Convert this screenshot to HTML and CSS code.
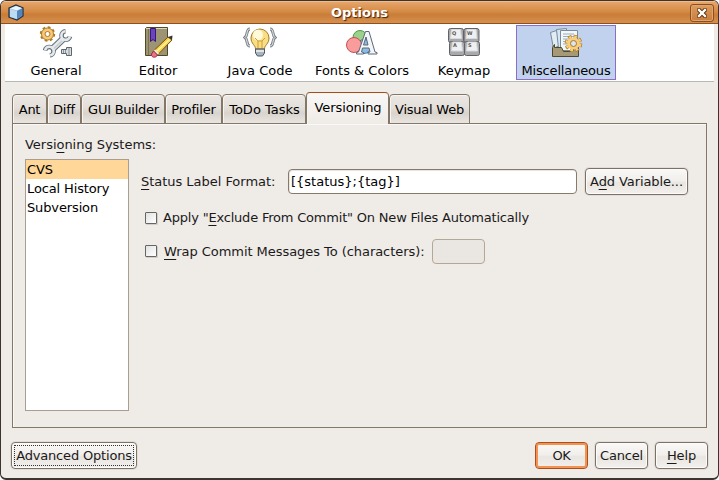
FILE: index.html
```html
<!DOCTYPE html>
<html lang="en">
<head>
<meta charset="utf-8">
<title>Options</title>
<link rel="stylesheet" href="styles.css">
</head>
<body>
<div class="window">
  <header class="titlebar">
    <svg class="app-icon" width="16" height="18" viewBox="0 0 16 18"><path d="M1 4 8 1l7 3v8l-6 4-8-3z" fill="#8db5dc" stroke="#234" stroke-width="1.3"/><path d="M2 5l7 2v8l-7-2z" fill="#bcdcf5"/><path d="M9 7l5-2.500v7L9 15z" fill="#5585bd"/><path d="M2 4.500 8 2l6 2-5 2.500z" fill="#eaf5fc"/></svg>
    <h1>Options</h1>
    <button class="close" aria-label="Close"><svg width="10" height="10" viewBox="0 0 10 10"><path d="M2 2l6 6M8 2l-6 6" stroke="#5a2c0c" stroke-width="4.200" stroke-linecap="square"/><path d="M2 2l6 6M8 2l-6 6" stroke="#fff" stroke-width="2.400" stroke-linecap="square"/></svg></button>
  </header>
  <nav class="toolbar">
    <div class="cat"><svg width="34" height="34" viewBox="0 0 34 34">
      <circle cx="8.500" cy="9" r="6.800" fill="none" stroke="#b17822" stroke-width="1.800" stroke-dasharray="2.800 2.540"/><circle cx="8.500" cy="9" r="6" fill="#f5ca79" stroke="#b17822"/><circle cx="8.500" cy="9" r="2.500" fill="#fff" stroke="#b17822"/>
      <g fill="none" stroke="#67717a"><path d="M26.500 6.200A4.300 4.300 0 1 0 31 11.500M6 25.500A4.300 4.300 0 1 1 11 30.500" stroke-width="4.600"/><path d="M24 14L13.500 24" stroke-width="7"/></g>
      <g fill="none" stroke="#e5e9ec"><path d="M26.300 6.300A4.300 4.300 0 1 0 30.900 11.300M6.200 25.300A4.300 4.300 0 1 1 11.100 30.300" stroke-width="2.600"/><path d="M24.500 13.500L13 24.500" stroke-width="4.800"/></g>
      <path d="M23 16L15 23.500" stroke="#c5cbd0" stroke-width="1.500"/>
      <path d="M22.500 24.500h5v-2h5v8h-5V28.500h-5z" fill="#d8dee2" stroke="#5c666f"/><path d="M24.500 25v3m2-3v3M30 23v7" stroke="#8b959d"/></svg><span>General</span></div>
    <div class="cat"><svg width="34" height="34" viewBox="0 0 34 34"><path d="M4.500 3.500l1-1h21v28h-22z" fill="#9c9475" stroke="#514826"/><path d="M5 3.500h21" stroke="#ddd7bd"/><path d="M7.500 4v26" stroke="#7b7250"/><path d="M9.500 3.500h5v13l-2.500-2-2.500 2z" fill="#6944ba" stroke="#34177a"/><path d="M12.500 26L27 12l4 3L16.500 30z" fill="#f9d149" stroke="#725515"/><path d="M15.500 26.500l13-12" stroke="#fff3a4" stroke-width="1.500"/><path d="M27 12l4.500-1.500-.5 4.500z" fill="#333"/><path d="M12.500 26l4 4c-2 4-7 2-6-1z" fill="#ef7184" stroke="#9b3140"/><path d="M13.500 25l4 4" stroke="#eee" stroke-width="1.500"/></svg><span>Editor</span></div>
    <div class="cat"><svg width="34" height="34" viewBox="0 0 34 34"><g fill="none" stroke="#7f858a" stroke-width="3"><path d="M7 4c-4 0-2 6-5 8.500 3 2 1 8.500 5 8.500M27 4c4 0 2 6 5 8.500-3 2-1 8.500-5 8.500"/></g><g fill="none" stroke="#e7eaec"><path d="M7 4c-4 0-2 6-5 8.500 3 2 1 8.500 5 8.500M27 4c4 0 2 6 5 8.500-3 2-1 8.500-5 8.500"/></g><path d="M12.500 24c0-4-4.500-5-4.500-11a9 9 0 0 1 18 0c0 6-4.500 7-4.500 11z" fill="#f9df83" stroke="#a2772d"/><ellipse cx="15" cy="10" rx="5" ry="5.500" fill="#fffad9"/><path d="M12 13l3 3v8m7-11l-3 3v8m-4-8h4" fill="none" stroke="#d09d38"/><path d="M12.500 24h9v4l-2 3h-5l-2-3z" fill="#a8b5bf" stroke="#4e5962"/><path d="M13 26h8" stroke="#f3f6f7" stroke-width="1.500"/></svg><span>Java Code</span></div>
    <div class="cat"><svg width="34" height="34" viewBox="0 0 34 34"><circle cx="15" cy="12.500" r="7" fill="#9bd28b" stroke="#4f9a49"/><circle cx="19" cy="21.500" r="7" fill="#8cbbe5" stroke="#3d72ad"/><circle cx="9" cy="20" r="7.500" fill="#fa9c9c" stroke="#c54f54"/><path d="M11.500 29v-1.500l2-.5 7-20.500h3.500l6 20.500 2 .5V29h-9v-1.500l2-.5-1-4h-6.500l-1 4 2 .5V29zM18.500 20h4.500l-2-8z" fill="#f4f5f6" stroke="#596a77" fill-rule="evenodd"/></svg><span>Fonts &amp; Colors</span></div>
    <div class="cat"><svg width="34" height="34" viewBox="0 0 34 34"><g stroke="#606266" fill="#a7a9ac"><rect x="1.500" y="3.500" width="15" height="14" rx="2"/><rect x="17" y="3.500" width="15" height="14" rx="2"/><rect x="2.500" y="16.500" width="15" height="14" rx="2"/><rect x="17.500" y="16.500" width="15" height="14" rx="2"/></g><g fill="#f0f0f1" stroke="#d9dadc"><path d="M4.500 4.500h9l1 9h-11zM20 4.500h9l1 9H19zM5.500 17h9l1 9h-11zM20.500 17h9l1 9h-11z"/></g><g class="keys"><text x="5" y="10">Q</text><text x="20" y="10">W</text><text x="6" y="22">A</text><text x="21" y="22">S</text></g></svg><span>Keymap</span></div>
    <div class="cat selected"><svg width="34" height="34" viewBox="0 0 34 34"><path d="M1.500 7.500l6-2 5 14-8 4z" fill="#e0edf5" stroke="#788b99"/><path d="M7.500 4.500l10-1v20h-8z" fill="#d5e7f2" stroke="#788b99"/><path d="M11.500 5.500h17v20h-17z" fill="#f2f7fa" stroke="#788b99"/><path d="M14 9h11m-11 2.500h11M14 14h7m-7 2.500h5m-5 2.500h5" stroke="#9cafbd"/><path d="M3.500 22.500l2-3v3h7l2 4h9l2-4h4v9h-26z" fill="#a69976" stroke="#524726"/><circle cx="24.500" cy="18.500" r="7.200" fill="none" stroke="#b77b20" stroke-width="3.200" stroke-dasharray="3.500 2.155"/><circle cx="24.500" cy="18.500" r="6.800" fill="none" stroke="#f9cf79" stroke-width="2.400" stroke-dasharray="2.500 2.840" stroke-dashoffset="-.5"/><circle cx="24.500" cy="18.500" r="6" fill="#f9cf79"/><circle cx="24.500" cy="18.500" r="3" fill="#dce5ef" stroke="#a87528"/></svg><span>Miscellaneous</span></div>
  </nav>
  <main>
    <div class="tabs">
      <div class="tab ant">Ant</div><div class="tab diff">Diff</div><div class="tab gui">GUI Builder</div><div class="tab prof">Profiler</div><div class="tab todo">ToDo Tasks</div><div class="tab active">Versioning</div><div class="tab visual">Visual Web</div>
    </div>
    <section class="panel">
      <div class="systems">
        <label>Versi<u>o</u>ning Systems:</label>
        <ul><li class="current">CVS</li><li>Local History</li><li>Subversion</li></ul>
      </div>
      <div class="settings">
        <div class="row format"><label><u>S</u>tatus Label Format:</label><div class="field">[{status};{tag}]</div><button class="btn add">A<u>d</u>d Variable...</button></div>
        <div class="row check exclude"><i class="box"></i><label>Apply "<u>E</u>xclude From Commit" On New Files Automatically</label></div>
        <div class="row check wrap"><i class="box"></i><label><u>W</u>rap Commit Messages To (characters):</label><div class="field disabled"></div></div>
      </div>
    </section>
    <footer><button class="btn advanced"><span>Advanced Options</span></button><button class="btn ok">OK</button><button class="btn cancel">Cancel</button><button class="btn help"><u>H</u>elp</button></footer>
  </main>
</div>
</body>
</html>
```
FILE: styles.css
```css
* { box-sizing: border-box; }
html { background: #fff; }
body { margin: 0; font: 13px/19px "DejaVu Sans", sans-serif; color: #1a1a1a; }
u { text-decoration: underline 1px; text-underline-offset: 3px; text-decoration-skip-ink: none; }
.window { width: 719px; height: 480px; border: 1px solid #3b342f; border-bottom-width: 2px; border-radius: 6px; background: #efebe7; overflow: hidden; }
.titlebar { height: 23px; display: flex; align-items: center; padding: 0 4px 0 7px; background: linear-gradient(#e6a56a, #d58b45 45%, #c97d38 60%, #d6914f); border-top: 1px solid #f0bc8c; border-bottom: 1px solid #8d5120; }
.titlebar h1 { flex: 1; margin: 0; text-align: center; font-size: 13px; line-height: 20px; color: #fff; text-shadow: 1px 1px 1px #402108; padding-left: 5px; }
.close { width: 24px; height: 18px; padding: 0; display: flex; align-items: center; justify-content: center; border: 1px solid #8d4d1d; border-radius: 3px; background: linear-gradient(#dd9c60, #c97d3b); box-shadow: inset 0 0 0 1px #dfa470; }
.toolbar { height: 58px; margin: 0 4px; padding: 1px; display: flex; gap: 2px; background: #fff; border-bottom: 1px solid #b8b8b4; }
.cat { width: 100px; height: 55px; border: 1px solid transparent; display: flex; flex-direction: column; align-items: center; color: #000; }
.cat svg { margin-top: -1px; height: 34px; flex: none; }
.cat span { line-height: 19px; margin-top: 2px; flex: none; }
.selected { background: #c1d2ee; border-color: #8e6ec2; }
.selected span { letter-spacing: -.15px; }
.keys { font: bold 5px "DejaVu Sans", sans-serif; fill: #555; }
main { padding: 10px 11px 0; }
.tabs { height: 32px; display: flex; align-items: flex-end; position: relative; }
.tab { height: 30px; border: 1px solid #837867; border-radius: 4px 4px 0 0; background: linear-gradient(#ebe7e3, #e4dfda 45%, #d9d3cd 65%, #e9e5e0); box-shadow: inset 1px 1px #f7f5f2; text-align: center; line-height: 29px; color: #000; white-space: nowrap; }
.ant { width: 35px; letter-spacing: -.3px; }
.diff { width: 34px; letter-spacing: -.2px; }
.gui { width: 84px; letter-spacing: -.25px; padding-left: 1px; }
.prof { width: 57px; letter-spacing: -.15px; }
.todo { width: 84px; padding-left: 1px; }
.active { width: 83px; height: 32px; border-top-color: #a44e1c; border-bottom: 0; background: linear-gradient(#f9f8f6, #efebe7); line-height: 30px; letter-spacing: -.1px; padding-left: 1px; }
.visual { width: 81px; letter-spacing: -.25px; }
.panel { width: 695px; height: 305px; margin-top: -1px; border: 1px solid #837867; box-shadow: inset 1px 1px #faf9f7; display: flex; padding: 11px 12px; }
.systems { width: 104px; white-space: nowrap; flex: none; }
.systems label { display: block; height: 24px; line-height: 19px; letter-spacing: -.03px; }
.systems ul { height: 252px; margin: 0; padding: 0; list-style: none; border: 1px solid #a99c90; background: #fff; }
.systems li { height: 19px; padding-left: 1px; line-height: 20px; color: #000; letter-spacing: -.13px; }
.systems .current { background: #ffd799; }
.settings { padding: 33px 0 0 12px; flex: 1; white-space: nowrap; }
.row { display: flex; align-items: center; }
.format { height: 27px; }
.format label { width: 147px; letter-spacing: -.03px; }
.field { width: 289px; height: 25px; border: 1px solid #857a6c; border-radius: 4px; background: #fff; padding-left: 2px; line-height: 23px; color: #000; box-shadow: inset 1px 1px #e9e6e2; }
.btn { height: 27px; padding: 0; font: inherit; color: #1a1a1a; border: 1px solid #7b7165; border-radius: 4px; background: linear-gradient(#faf9f7, #f1eeeb 48%, #e9e5e1 55%, #f3f0ed); box-shadow: 0 0 0 1px #e1ddd8, inset 0 0 0 1px #fcfbfa; white-space: nowrap; }
.add { width: 103px; margin-left: 8px; letter-spacing: -.1px; }
.check { height: 24px; margin-top: 11px; padding-left: 4px; }
.exclude label { letter-spacing: -.2px; margin: -2px 0 0 -1px; }
.box { width: 12px; height: 12px; border: 1px solid #666; border-radius: 1px; background: linear-gradient(135deg, #e2e2e2, #fff); margin-right: 7px; box-shadow: 1px 1px #d2cec9; }
.wrap { margin-top: 8px; height: 26px; }
.wrap label { letter-spacing: -.05px; }
.disabled { width: 53px; margin-left: 7px; background: #eae6e1; border-color: #b5a796; box-shadow: none; }
footer { height: 27px; margin: 14px 0 0 -1px; display: flex; width: 697px; }
.advanced { width: 126px; padding: 2px; letter-spacing: -.18px; }
.advanced span { display: block; height: 21px; border: 1px dotted #333; line-height: 20px; }
.ok { width: 53px; margin-left: auto; border: 1px solid #a9501e; box-shadow: inset 0 0 0 2px #f59250; letter-spacing: -.5px; }
.cancel { width: 53px; margin-left: 7px; letter-spacing: -.2px; }
.help { width: 53px; margin-left: 7px; letter-spacing: -.1px; }
```
